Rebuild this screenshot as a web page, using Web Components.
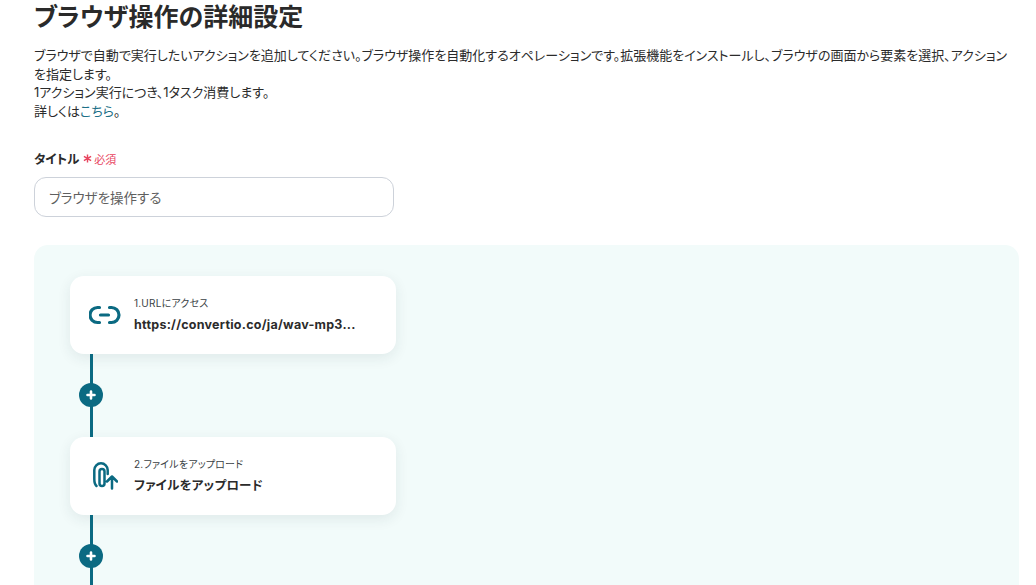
<!DOCTYPE html>
<html lang="ja"><head><meta charset="utf-8">
<style>
html,body{margin:0;height:585px;overflow:hidden;background:#fff}
body{font-family:Inter,"Noto Sans CJK JP",sans-serif;color:#2b2b2b;font-feature-settings:"palt"}
</style></head><body>
<settings-page>
  <h-title slot="head">ブラウザ操作の詳細設定</h-title>
  <title-field slot="field" label="タイトル" value="ブラウザを操作する"></title-field>
  <flow-panel slot="panel">
    <flow-step step="1.URLにアクセス" name="https://convertio.co/ja/wav-mp3..." icon="link"></flow-step>
    <flow-add></flow-add>
    <flow-step step="2.ファイルをアップロード" name="ファイルをアップロード" icon="clip"></flow-step>
    <flow-add></flow-add>
  </flow-panel>
</settings-page>
<script>
function def(name,html){customElements.define(name,class extends HTMLElement{connectedCallback(){if(!this.shadowRoot){this.attachShadow({mode:'open'}).innerHTML=typeof html==='function'?html(this):html;}}})}
def('settings-page',`<style>
:host{display:block;padding:0 17px 0 34px;height:585px;overflow:hidden;box-sizing:border-box}
.desc{margin:0;padding-top:12px;font-size:13px;line-height:18.7px;color:#2b2b2b}
a{color:#1d7087;text-decoration:none}
.f{display:block;margin-top:29px}
.p{display:block;margin-top:28px}
</style>
<slot name="head"></slot>
<p class="desc">ブラウザで自動で実行したいアクションを追加してください。ブラウザ操作を自動化するオペレーションです。拡張機能をインストールし、ブラウザの画面から要素を選択、アクションを指定します。<br>1アクション実行につき、1タスク消費します。<br>詳しくは<a href="#">こちら</a>。</p>
<div class="f"><slot name="field"></slot></div>
<div class="p"><slot name="panel"></slot></div>`);
def('h-title',`<style>:host{display:block;font-size:25px;font-weight:700;line-height:34px;color:#2a2a2a;height:34px}</style><slot></slot>`);
def('title-field',h=>`<style>
:host{display:block}
.l{display:flex;align-items:center;height:18px;gap:4px;font-size:12.5px;font-weight:700;color:#2b2b2b}
.r{display:flex;align-items:center;gap:2px;font-size:11px;font-weight:400;color:#e8455f}
.box{margin-top:9px;width:360px;height:40px;box-sizing:border-box;border:1px solid #cdd2da;border-radius:12px;padding:0 14px;display:flex;align-items:center;font-size:13.5px;color:#5f5f5f}
svg{display:block}
</style>
<div class="l"><span>${h.getAttribute('label')}</span><span class="r"><svg width="9" height="9" viewBox="0 0 10 10"><path d="M5 .5v9M1 2.700l8 4.600M9 2.700 1 7.300" stroke="#e8455f" stroke-width="1.600"/></svg>必須</span></div>
<div class="box">${h.getAttribute('value')}</div>`);
def('flow-panel',`<style>:host{display:block;height:400px;background:#f2fbfa;border-radius:14px;padding:31px 0 0 36px;box-sizing:border-box;width:985px}</style><slot></slot>`);
const icons={
link:`<svg width="32" height="20" viewBox="0 0 32 20" fill="none" stroke="#0b6a82" stroke-width="3.200" stroke-linecap="round"><path d="M10.500 2.500H8.500a7.500 7.500 0 0 0 0 15h2M20.500 2.500h2a7.500 7.500 0 0 1 0 15h-2M11.500 10h8"/></svg>`,
clip:`<svg width="26" height="28" viewBox="0 0 26 28" fill="none" stroke="#0b6a82" stroke-width="2.500" stroke-linecap="round" stroke-linejoin="round"><path d="M2.300 17V8a6.700 6.700 0 0 1 13.400 0v4M7.500 9.500a2.500 2.500 0 0 1 5 0V21.500a2.500 2.500 0 0 1-5 0V9.500M2.300 17c0 3 .5 5.500 2.200 7M20 26.500V14.500M15 19.500l5-5 5 5"/></svg>`};
def('flow-step',h=>`<style>
:host{display:flex;align-items:center;width:326px;height:78px;background:#fff;border-radius:14px;box-shadow:0 4px 14px rgba(30,60,70,.09);box-sizing:border-box}
.i{width:64px;display:flex;justify-content:center;padding-left:5px;box-sizing:border-box;flex:none}
.s{font-size:10px;line-height:14px;color:#3a3f45;letter-spacing:.2px}
.n{font-size:12.500px;font-weight:700;line-height:18px;margin-top:6px;color:#2b2b2b;letter-spacing:.25px}
</style>
<div class="i">${icons[h.getAttribute('icon')]}</div>
<div><div class="s">${h.getAttribute('step')}</div><div class="n">${h.getAttribute('name')}</div></div>`);
def('flow-add',`<style>
:host{display:flex;width:326px;height:83px;position:relative}
.line{position:absolute;left:20px;top:0;bottom:0;width:3px;background:#0b6a82}
.b{position:absolute;left:9px;top:29px;width:24px;height:24px;border-radius:50%;background:#0b6a82}
svg{position:absolute;left:6px;top:6px}
</style><div class="line"></div><div class="b"><svg width="12" height="12" viewBox="0 0 12 12"><path d="M6 2.500v7M2.500 6h7" stroke="#fff" stroke-width="2.600" stroke-linecap="round"/></svg></div>`);
</script>
</body></html>
